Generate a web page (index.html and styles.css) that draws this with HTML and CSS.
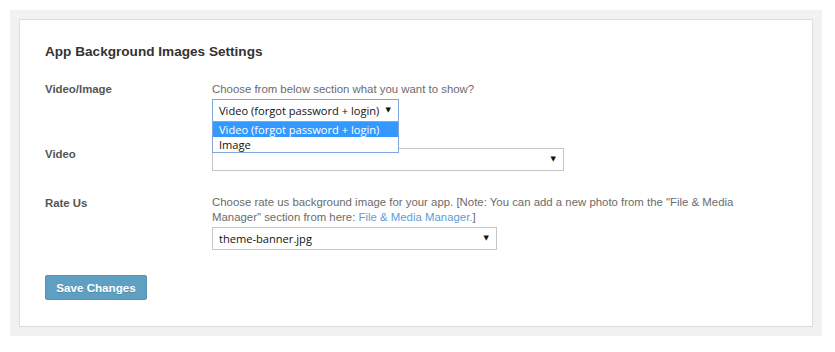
FILE: index.html
```html
<!DOCTYPE html>
<html lang="en">
<head>
    <meta charset="UTF-8">
    <title>App Background Images Settings</title>
    <link rel="stylesheet" href="styles.css">
</head>
<body>
    <div class="wrap">
        <div class="card">
            <h2 class="card-title">App Background Images Settings</h2>

            <div class="row row-first">
                <div class="label">Video/Image</div>
                <div class="field">
                    <p class="desc">Choose from below section what you want to show?</p>
                    <div class="select-holder">
                        <div class="select select-open select-sm">
                            <span class="select-value">Video (forgot password + login)</span>
                            <span class="select-arrow">&#9660;</span>
                        </div>
                        <ul class="dropdown">
                            <li class="option option-active">Video (forgot password + login)</li>
                            <li class="option">Image</li>
                        </ul>
                    </div>
                </div>
            </div>

            <div class="row row-video">
                <div class="label">Video</div>
                <div class="field">
                    <div class="select select-lg">
                        <span class="select-value"></span>
                        <span class="select-arrow">&#9660;</span>
                    </div>
                </div>
            </div>

            <div class="row row-rate">
                <div class="label">Rate Us</div>
                <div class="field field-wide">
                    <p class="desc">Choose rate us background image for your app. [Note: You can add a new photo from the "File &amp; Media Manager" section from here: <a href="#" class="link">File &amp; Media Manager.</a>]</p>
                    <div class="select select-md">
                        <span class="select-value">theme-banner.jpg</span>
                        <span class="select-arrow">&#9660;</span>
                    </div>
                </div>
            </div>

            <button class="btn">Save Changes</button>
        </div>
    </div>
</body>
</html>
```

FILE: styles.css
```css
* {
    margin: 0;
    padding: 0;
    box-sizing: border-box;
}

body {
    font-family: "Liberation Sans", Arial, sans-serif;
    background: #ffffff;
    color: #555555;
    padding: 10px 13px 17px 10px;
}

.wrap {
    background: #f1f1f1;
    padding: 9px;
}

.card {
    background: #ffffff;
    border: 1px solid #dcdcdc;
    padding: 24px 25px 26px;
}

.card-title {
    font-size: 13.6px;
    line-height: 16px;
    font-weight: 700;
    color: #333333;
    margin-bottom: 22px;
}

.row {
    display: flex;
    margin-bottom: 26px;
}

.row-video {
    margin-bottom: 24px;
}

.row-first .label {
    margin-top: -1px;
}

.row-video .label {
    margin-top: -2px;
}

.label {
    width: 167px;
    flex-shrink: 0;
    font-size: 11.4px;
    line-height: 16px;
    font-weight: 700;
    color: #555555;
}

.field {
    flex: 1;
}

.field-wide {
    flex: none;
    width: 560px;
}

.desc {
    font-size: 11.4px;
    line-height: 15.5px;
    color: #6b6b6b;
    margin-bottom: 1px;
}

.link {
    color: #5b9dd9;
    text-decoration: none;
}

.select-holder {
    position: relative;
    width: 187px;
}

.select {
    display: flex;
    align-items: center;
    justify-content: space-between;
    height: 23px;
    padding: 0 7px 0 6px;
    border: 1px solid #c6c6c6;
    background: #ffffff;
    font-family: "Open Sans", "Noto Sans", sans-serif;
    font-size: 11.1px;
    color: #111111;
}

.select-sm {
    width: 187px;
}

.select-lg {
    width: 352px;
}

.select-md {
    width: 285px;
}

.select-open {
    border-color: #7fa6dc;
}

.select-arrow {
    font-family: "DejaVu Sans", sans-serif;
    font-size: 7px;
    color: #111111;
}

.dropdown {
    position: absolute;
    top: 22px;
    left: 0;
    width: 187px;
    list-style: none;
    background: #ffffff;
    border: 1px solid #7fa6dc;
    font-family: "Open Sans", "Noto Sans", sans-serif;
    font-size: 11.1px;
    color: #111111;
    z-index: 2;
}

.option {
    height: 15px;
    line-height: 15px;
    padding-left: 6px;
}

.option-active {
    background: #3399ff;
    color: #ffffff;
}

.btn {
    display: block;
    width: 102px;
    height: 25px;
    margin-top: -1px;
    background: #5e9fc2;
    border: 1px solid #5592b4;
    border-radius: 2px;
    color: #ffffff;
    font-family: "Liberation Sans", Arial, sans-serif;
    font-size: 11.6px;
    font-weight: 700;
    text-shadow: 0 1px 0 rgba(0, 0, 0, 0.15);
    cursor: pointer;
}
```
